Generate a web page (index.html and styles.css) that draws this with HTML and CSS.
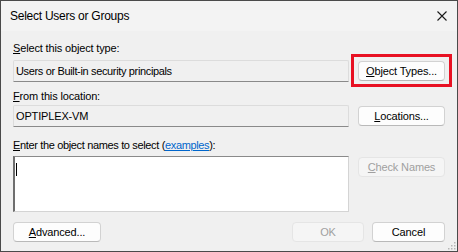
FILE: index.html
```html
<!DOCTYPE html>
<html>
<head>
<meta charset="utf-8">
<link rel="stylesheet" href="styles.css">
</head>
<body>
<div class="window">
  <div class="titlebar">
    <span class="title">Select Users or Groups</span>
    <svg class="close" width="10" height="10" viewBox="0 0 10 10"><path d="M0.5 0.5 L9.5 9.5 M9.5 0.5 L0.5 9.5" stroke="#1a1a1a" stroke-width="1.1" fill="none"/></svg>
  </div>
  <div class="content">
    <div class="grid">
      <div class="label l1"><u>S</u>elect this object type:</div>
      <div></div>
      <div class="field f1 tight">Users or Built-in security principals</div>
      <div class="hl-wrap"><button class="btn"><u>O</u>bject Types...</button></div>
      <div class="label l2"><u>F</u>rom this location:</div>
      <div></div>
      <div class="field f2">OPTIPLEX-VM</div>
      <button class="btn b2"><u>L</u>ocations...</button>
      <div class="label l3 tight"><u>E</u>nter the object names to select (<span class="link">examples</span>):</div>
      <div></div>
      <div class="textarea"><span class="caret"></span></div>
      <button class="btn b3 disabled"><u>C</u>heck Names</button>
    </div>
    <div class="footer">
      <button class="btn adv"><u>A</u>dvanced...</button>
      <button class="btn ok disabled">OK</button>
      <button class="btn cancel">Cancel</button>
    </div>
  </div>
  <svg class="grip" width="9" height="9" viewBox="0 0 9 9">
    <rect x="7" y="1" width="1.5" height="1.5" fill="#b5b5b5"/>
    <rect x="4" y="4" width="1.5" height="1.5" fill="#b5b5b5"/>
    <rect x="7" y="4" width="1.5" height="1.5" fill="#b5b5b5"/>
    <rect x="1" y="7" width="1.5" height="1.5" fill="#b5b5b5"/>
    <rect x="4" y="7" width="1.5" height="1.5" fill="#b5b5b5"/>
    <rect x="7" y="7" width="1.5" height="1.5" fill="#b5b5b5"/>
  </svg>
</div>
</body>
</html>
```
FILE: styles.css
```css
* { box-sizing: border-box; }
html, body { margin: 0; padding: 0; }
body {
  font-family: "Liberation Sans", Arial, sans-serif;
  font-size: 11px;
  letter-spacing: -0.15px;
  color: #000;
  background: #f0f0f0;
}
.window {
  position: relative;
  width: 458px;
  height: 252px;
  border: 1px solid #4a4a4a;
  background: #f0f0f0;
  display: flex;
  flex-direction: column;
}
.titlebar {
  height: 30px;
  background: #f3f3f3;
  display: flex;
  align-items: center;
  justify-content: space-between;
  padding: 0 10px 0 9px;
}
.title { font-size: 12px; line-height: 16px; letter-spacing: -0.25px; }
.close { display: block; }
.content {
  padding: 9px 12px 0 12px;
}
.grid {
  display: grid;
  grid-template-columns: 336px 87px;
  column-gap: 9px;
  align-items: start;
}
.label { line-height: 16px; white-space: nowrap; }
.tight { letter-spacing: -0.35px; }
.l2 { margin-top: 6px; }
.l3 { margin-top: 10px; }
u { text-decoration: underline; text-underline-offset: 1px; }
.link { color: #0066cc; text-decoration: underline; text-underline-offset: 1px; }
.field {
  height: 22px;
  border: 1px solid #dcdcdc;
  border-bottom-color: #8a8a8a;
  background: #f0f0f0;
  border-radius: 2px 2px 0 0;
  padding: 0 2px;
  line-height: 20px;
  white-space: nowrap;
}
.f1 { margin-top: 4px; }
.f2 { margin-top: 1px; }
.textarea {
  margin-top: 3px;
  height: 56px;
  background: #fff;
  border: 1px solid #d4d4d4;
  border-left: 2px solid #6e6e6e;
  border-top-color: #8a8a8a;
  padding: 6px 0 0 1px;
}
.caret {
  display: block;
  width: 1px;
  height: 13px;
  background: #000;
}
.btn {
  display: block;
  width: 100%;
  font-family: inherit;
  font-size: 11px;
  letter-spacing: -0.15px;
  color: #000;
  height: 20px;
  padding: 0;
  background: #fdfdfd;
  border: 1px solid #d2d2d2;
  border-bottom-color: #b9b9b9;
  border-radius: 4px;
  line-height: 18px;
  text-align: center;
  white-space: nowrap;
}
.btn.disabled {
  background: #f5f5f5;
  border-color: #e5e5e5;
  color: #a0a0a0;
}
.hl-wrap {
  position: relative;
  margin-top: 5px;
}
.hl-wrap::after {
  content: "";
  position: absolute;
  top: -7px;
  left: -7px;
  right: -7px;
  bottom: -6px;
  border: 3px solid #e81123;
}
.b2 { margin-top: 2px; }
.b3 { margin-top: 4px; }
.footer {
  display: flex;
  margin-top: 10px;
}
.footer .btn { width: auto; }
.adv { width: 88px !important; }
.ok { width: 72px !important; margin-left: auto; }
.cancel { width: 73px !important; margin-left: 8px; }
.grip {
  position: absolute;
  right: 1px;
  bottom: 1px;
}
```
